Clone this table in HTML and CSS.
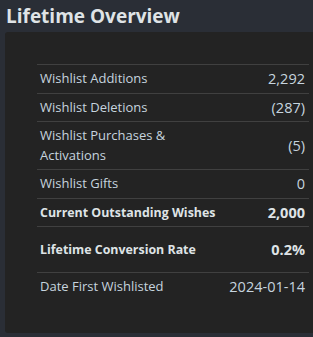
FILE: index.html
```html
<!DOCTYPE html>
<html>
<head>
<meta charset="utf-8">
<link rel="stylesheet" href="styles.css">
</head>
<body>
<h2 class="title">Lifetime Overview</h2>
<div class="panel">
  <div class="table">
    <div class="row"><span class="label">Wishlist Additions</span><span class="value">2,292</span></div>
    <div class="row"><span class="label">Wishlist Deletions</span><span class="value">(287)</span></div>
    <div class="row"><span class="label">Wishlist Purchases &amp;<br>Activations</span><span class="value">(5)</span></div>
    <div class="row"><span class="label">Wishlist Gifts</span><span class="value">0</span></div>
    <div class="row bold"><span class="label">Current Outstanding Wishes</span><span class="value">2,000</span></div>
    <div class="row bold tall"><span class="label">Lifetime Conversion Rate</span><span class="value">0.2%</span></div>
    <div class="row last"><span class="label">Date First Wishlisted</span><span class="value">2024-01-14</span></div>
  </div>
</div>
</body>
</html>
```

FILE: styles.css
```css
html, body {
  margin: 0;
  padding: 0;
  overflow: hidden;
  background: #2a2e36;
}
body {
  padding: 4px 0 0 5px;
  font-family: "Open Sans", "Liberation Sans", sans-serif;
  color: #c6d4df;
}
.title {
  margin: 0 0 4px 1px;
  font-size: 19px;
  line-height: 24px;
  font-weight: 700;
  color: #dfe3e6;
}
.panel {
  background: #232323;
  border-radius: 3px 0 0 3px;
  padding: 32px 4px 32px 32px;
}
.table {
  border-top: 1px solid #404040;
}
.row {
  display: flex;
  justify-content: space-between;
  align-items: center;
  padding: 4px 4px 4px 3px;
  line-height: 19.5px;
  border-bottom: 1px solid #404040;
}
.label {
  font-size: 13px;
}
.value {
  font-size: 14.5px;
}
.row.bold {
  font-weight: 700;
  color: #dfe3e6;
}
.row.bold .label {
  font-size: 12.4px;
}
.row.tall {
  padding-top: 13px;
  padding-bottom: 12.5px;
}
.row.last {
  border-bottom: none;
}
```
